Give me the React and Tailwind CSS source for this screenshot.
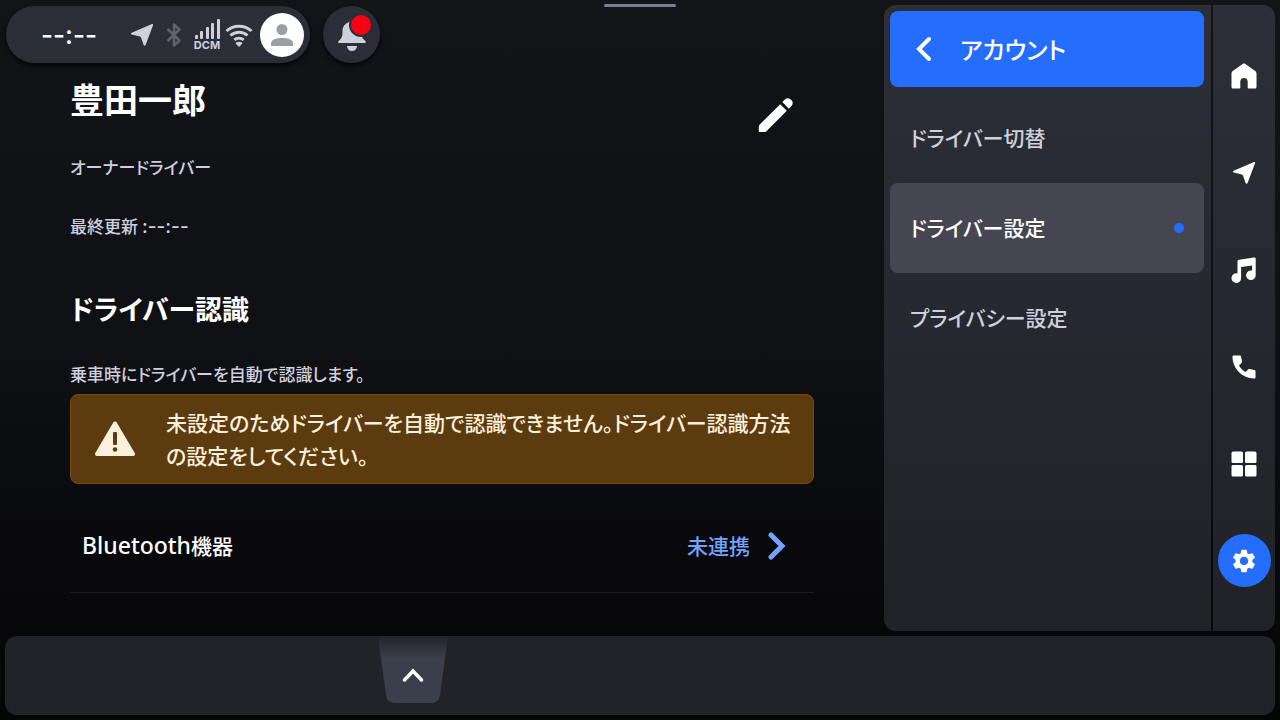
import React from 'react';
import clsx from 'clsx';
import { MdSettings } from 'react-icons/md';

const ArrowIcon = ({ className }) => (
  <svg viewBox="0 0 24 24" className={className} fill="currentColor" aria-hidden="true">
    <path d="M22 1.100c.7-.3 1.300.3 1.100 1L15.600 22c-.4 1-1.700 1-2 0l-2.500-7.300c-.2-.6-.6-1-1.200-1.200L1.700 11.600c-1-.3-1-1.500 0-1.900z" />
  </svg>
);

const BluetoothIcon = () => (
  <svg viewBox="0 0 16 26" className="h-[26px] w-4 text-[#60616c]" fill="none" stroke="currentColor" strokeWidth="2.600" strokeLinejoin="round" aria-hidden="true">
    <path d="M1.500 7L13.500 18.500L8 23.500V2.500L13.500 7.500L1.500 19" />
  </svg>
);

const SignalIcon = () => (
  <svg viewBox="0 0 25 20" className="h-5 w-[25px]" fill="currentColor" aria-hidden="true">
    <rect x="0" y="16" width="3" height="4" rx="1" />
    <rect x="5" y="12" width="3" height="8" rx="1" />
    <rect x="11" y="8" width="3" height="12" rx="1" />
    <rect x="16" y="4" width="3" height="16" rx="1" />
    <rect x="22" y="0" width="3" height="20" rx="1" />
  </svg>
);

const WifiIcon = () => (
  <svg viewBox="0 0 28 24" className="ml-[5px] h-6 w-7" fill="none" stroke="currentColor" strokeWidth="3" aria-hidden="true">
    <path d="M1.500 8a18.500 18.500 0 0 1 25 0" />
    <path d="M5.500 12.500a12.800 12.800 0 0 1 17 0" />
    <path d="M9.300 16.900a7.200 7.200 0 0 1 9.400 0" />
    <path d="M13.200 23.300l-2.200-2.500c-.5-.6-.4-1.100.2-1.400a5.800 5.800 0 0 1 5.600 0c.6.300.7.800.2 1.400l-2.200 2.500c-.5.600-1.100.6-1.600 0z" fill="currentColor" stroke="none" />
  </svg>
);

const BellIcon = () => (
  <svg viewBox="0 0 28 34" className="h-[34px] w-7" fill="currentColor" aria-hidden="true">
    <path d="M14 1c1.400 0 2.400 1 2.400 2.400v.5c4.500 1 7.100 4.600 7.100 9.100 0 5 .4 7 3.300 9.500.8.800 1 1.200 1 2.500H.2c0-1.300.2-1.700 1-2.500C4.100 20 4.500 18 4.500 13c0-4.500 2.600-8.100 7.100-9.100v-.5C11.600 2 12.600 1 14 1z" />
    <path d="M8.800 28h10.400c-.5 3-2.500 5-5.200 5s-4.700-2-5.200-5z" />
  </svg>
);

const PencilIcon = () => (
  <svg viewBox="0 0 36 36" className="size-9" fill="currentColor" aria-hidden="true">
    <path d="M22.200 7.200l6.600 6.600L8.400 34.200c-.7.700-1.300.9-2.200.9H2c-.8 0-1.200-.4-1.200-1.200v-4.200c0-.9.300-1.500 1-2.200z" />
    <path d="M24.300 5.100l2.600-2.600a4.700 4.700 0 0 1 6.600 6.600l-2.600 2.600z" />
  </svg>
);

const WarningIcon = () => (
  <svg viewBox="0 0 40 36" className="h-9 w-10 shrink-0" aria-hidden="true">
    <path d="M20 2.500L38 33H2z" fill="#fdf0dc" stroke="#fdf0dc" strokeWidth="4" strokeLinejoin="round" />
    <rect x="18" y="11" width="4" height="13" rx="1" fill="#5c3b0e" />
    <circle cx="20" cy="28.500" r="2.300" fill="#5c3b0e" />
  </svg>
);

const Chevron = ({ points, viewBox, className, strokeWidth = 4 }) => (
  <svg viewBox={viewBox} className={className} fill="none" stroke="currentColor" strokeWidth={strokeWidth} strokeLinecap="round" strokeLinejoin="miter" aria-hidden="true">
    <polyline points={points} />
  </svg>
);

const HomeIcon = () => (
  <svg viewBox="0 0 26 26" className="size-[26px]" fill="currentColor" aria-hidden="true">
    <path d="M11.600 1c.9-.6 1.900-.6 2.800 0l9.500 6.800c1 .7 1.600 1.600 1.600 2.900V24c0 .9-.6 1.500-1.500 1.500h-6.500c-.5 0-.8-.3-.8-.8v-6.200c0-4.600-7.400-4.600-7.400 0v6.200c0 .5-.3.800-.8.800H2C1.100 25.500.5 24.900.5 24V10.700c0-1.300.6-2.200 1.600-2.900z" />
  </svg>
);

const MusicIcon = () => (
  <svg viewBox="0 0 26 26" className="size-[26px]" fill="currentColor" aria-hidden="true">
    <path d="M8.300 2.700L23 .5c1-.1 1.700.4 1.700 1.400v16.300a4.800 4.800 0 1 1-3.600-4.600V8.400l-11 1.500v11.300A4.800 4.800 0 1 1 6.500 16.500V4.600c0-1.200.6-1.700 1.800-1.900z" />
  </svg>
);

const PhoneIcon = () => (
  <svg viewBox="0 0 24 24" className="size-6" fill="currentColor" aria-hidden="true">
    <path d="M1.800.5h6c.8 0 1.200.4 1.300 1.100l.9 4.600c.1.700 0 1.200-.5 1.700L7 10.500c1.600 2.900 3.600 4.900 6.500 6.500l2.600-2.500c.5-.5 1-.6 1.700-.5l4.600.9c.7.100 1.100.6 1.100 1.300v6c0 .8-.5 1.300-1.300 1.300C10.500 23.500.5 13.500.5 1.800.5 1 1 .5 1.800.5z" />
  </svg>
);

const GridIcon = () => (
  <svg viewBox="0 0 26 26" className="size-[26px]" fill="currentColor" aria-hidden="true">
    <rect x="0.500" y="0.500" width="11.500" height="11.500" rx="1.500" />
    <rect x="14" y="0.500" width="11.500" height="11.500" rx="1.500" />
    <rect x="0.500" y="14" width="11.500" height="11.500" rx="1.500" />
    <rect x="14" y="14" width="11.500" height="11.500" rx="1.500" />
  </svg>
);

const App = () => {
  const menuItems = [
    { label: 'ドライバー切替' },
    { label: 'ドライバー設定', active: true },
    { label: 'プライバシー設定' },
  ];

  const navItems = [
    { label: 'ホーム', icon: <HomeIcon /> },
    { label: 'ナビ', icon: <ArrowIcon className="size-6" /> },
    { label: 'オーディオ', icon: <MusicIcon /> },
    { label: '電話', icon: <PhoneIcon /> },
    { label: 'アプリ', icon: <GridIcon /> },
    { label: '設定', icon: <MdSettings className="size-7" />, active: true },
  ];

  return (
    <div
      lang="ja"
      className="relative flex min-h-screen flex-col gap-[5px] bg-linear-to-b from-[#131418] via-[#0f1014] to-[#050507] p-[5px] font-['Noto_Sans_CJK_JP',sans-serif] font-medium text-white [font-feature-settings:'palt']"
    >
      {/* Pull-down handle */}
      <div className="absolute top-1 left-1/2 h-[3px] w-[72px] -translate-x-1/2 rounded-full bg-[#7b7c92]" />

      <div className="flex flex-1">
        <main className="min-w-0 flex-1">
          {/* Status bar */}
          <header className="flex gap-[13px] pt-px pl-px text-[#cfd0de]">
            <div className="flex h-[57px] w-[304px] items-center rounded-full bg-[#2c2e37] pr-[6px] pl-[35px] shadow-md shadow-black/60">
              <time className="w-[89px] font-['Inter',sans-serif] text-[26px] leading-8 text-white">--:--</time>
              <ArrowIcon className="mr-3 size-6" />
              <BluetoothIcon />
              <div className="ml-3 flex w-[26px] flex-col items-center">
                <SignalIcon />
                <span className="font-['Inter',sans-serif] text-[11px] leading-3 font-bold">DCM</span>
              </div>
              <WifiIcon />
              <button type="button" aria-label="プロフィール" className="ml-auto flex size-11 items-center justify-center rounded-full bg-white">
                <svg viewBox="0 0 24 24" className="size-6" fill="#9a9fa3" aria-hidden="true">
                  <circle cx="12" cy="6.500" r="5.500" />
                  <path d="M1 23v-2.500C1 16.500 6 15 12 15s11 1.500 11 5.500V23z" />
                </svg>
              </button>
            </div>
            <button type="button" aria-label="通知" className="relative flex size-[57px] items-center justify-center rounded-full bg-[#2c2e37] shadow-md shadow-black/60">
              <BellIcon />
              <span className="absolute top-[9px] right-[9px] size-5 rounded-full bg-[#fb0013] ring-2 ring-[#2c2e37]" />
            </button>
          </header>

          <div className="pt-4 pr-[70px] pl-[65px]">
            {/* Driver profile */}
            <section className="flex items-start justify-between">
              <div className="text-[#cfd0de]">
                <h1 className="text-[34px] leading-10 font-bold text-white">豊田一郎</h1>
                <p className="mt-[34px] text-[17px] leading-7">オーナードライバー</p>
                <p className="mt-[31px] text-[17px] leading-7">
                  最終更新<span className="ml-1 font-['Inter',sans-serif] text-[19px]">:--:--</span>
                </p>
              </div>
              <button type="button" aria-label="編集" className="mt-[18px] mr-5">
                <PencilIcon />
              </button>
            </section>

            {/* Driver recognition */}
            <section className="mt-12">
              <h2 className="text-[27px] leading-10 font-bold">ドライバー認識</h2>
              <p className="mt-[31px] text-[17px] leading-7 text-[#cfd0de]">乗車時にドライバーを自動で認識します。</p>

              <div role="alert" className="mt-[6px] flex items-center gap-[31px] rounded-lg border border-[#7a4a0b] bg-[#5c3b0e] py-[11px] pr-4 pl-6 text-[#fdf0dc]">
                <WarningIcon />
                <p className="text-[21px] leading-[33px]">未設定のためドライバーを自動で認識できません。ドライバー認識方法の設定をしてください。</p>
              </div>

              <button type="button" className="mt-[15px] flex h-[94px] w-full items-center justify-between border-b border-[#1a1b22] pr-7 pl-3 text-[21px]">
                <span>
                  <span className="font-['Noto_Sans',sans-serif] text-[23px]">Bluetooth</span>機器
                </span>
                <span className="flex items-center gap-[18px] text-[#73a2ff]">
                  未連携
                  <Chevron viewBox="0 0 18 28" points="3,3 14,14 3,25" strokeWidth={5} className="h-7 w-[18px]" />
                </span>
              </button>
            </section>
          </div>
        </main>

        {/* Account menu */}
        <aside className="w-[327px] rounded-l-xl bg-linear-to-b from-[#2d2f38] to-[#202227] p-[6px] pr-[7px]">
          <button type="button" className="flex h-[76px] w-full items-center rounded-lg bg-[#256dfc] pb-px pl-6 text-2xl">
            <Chevron viewBox="0 0 20 26" points="15,3 5,13 15,23" className="h-[26px] w-5" />
            <span className="ml-[26px]">アカウント</span>
          </button>
          <ul className="mt-[6px]">
            {menuItems.map((item) => (
              <li key={item.label}>
                <a
                  href="#"
                  className={clsx(
                    'flex h-[90px] items-center justify-between rounded-lg px-5 text-[21px]',
                    item.active ? 'bg-[#454652] text-white' : 'text-[#cfd0de]'
                  )}
                >
                  {item.label}
                  {item.active && <span className="size-[10px] rounded-full bg-[#256dfc]" />}
                </a>
              </li>
            ))}
          </ul>
        </aside>

        {/* Main navigation */}
        <nav className="ml-[2px] flex w-[62px] flex-col items-center gap-11 rounded-r-xl bg-linear-to-b from-[#2d2f38] to-[#202227] pt-11">
          {navItems.map((item) => (
            <a
              key={item.label}
              href="#"
              aria-label={item.label}
              className={clsx('flex size-[53px] items-center justify-center rounded-full', item.active && 'bg-[#256dfc]')}
            >
              {item.icon}
            </a>
          ))}
        </nav>
      </div>

      {/* Bottom bar */}
      <footer className="h-[79px] rounded-xl bg-[#222328]">
        <button type="button" aria-label="開く" className="ml-[373px] block">
          <svg viewBox="0 0 70 67" className="h-[67px] w-[70px]" aria-hidden="true">
            <defs>
              <linearGradient id="tab" x1="0" y1="0" x2="0" y2="1">
                <stop offset="0" stopColor="#222328" />
                <stop offset="0.340" stopColor="#3a3f4b" />
              </linearGradient>
            </defs>
            <path d="M0 0H70L62 59Q61 67 53 67H17Q9 67 8 59Z" fill="url(#tab)" />
            <polyline points="26.500,44 35,35 43.500,44" fill="none" stroke="#fff" strokeWidth="3.500" strokeLinecap="round" />
          </svg>
        </button>
      </footer>
    </div>
  );
};

export default App;
